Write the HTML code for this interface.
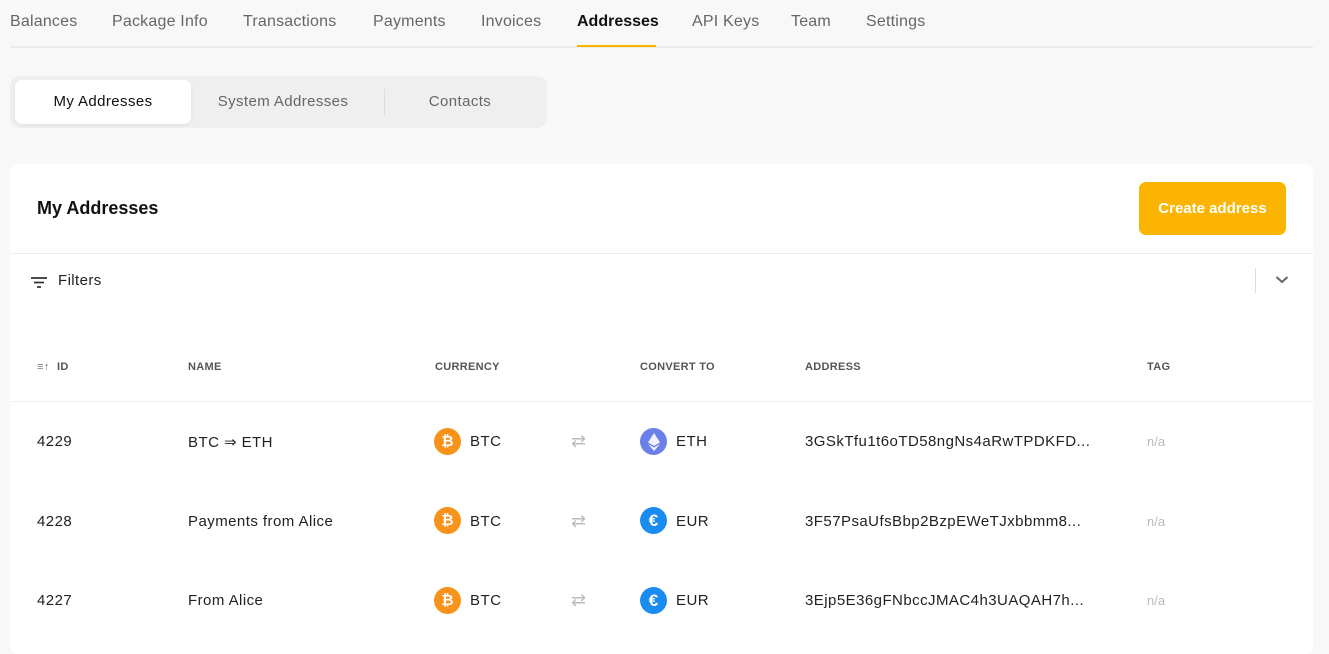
<!DOCTYPE html>
<html><head><meta charset="utf-8"><style>
*{box-sizing:border-box;margin:0;padding:0}
body{width:1329px;height:641px;overflow:hidden;background:#f8f8f8;font-family:"Liberation Sans",sans-serif;color:#222;position:relative}
.a{position:absolute;white-space:nowrap}
.nav{font-size:16px;color:#666;top:13px;letter-spacing:.2px}
.hd{font-size:11px;color:#555;font-weight:bold;top:361px;letter-spacing:.3px}
.cell{font-size:15px;color:#222;letter-spacing:.45px}
.ic{width:27px;height:27px;border-radius:50%;display:flex;align-items:center;justify-content:center;color:#fff;font-weight:bold;font-size:15px}
</style></head><body>
<div class="a nav" style="left:10px">Balances</div>
<div class="a nav" style="left:112px">Package Info</div>
<div class="a nav" style="left:243px">Transactions</div>
<div class="a nav" style="left:373px">Payments</div>
<div class="a nav" style="left:481px">Invoices</div>
<div class="a nav" style="left:577px;color:#111;font-weight:bold;letter-spacing:0">Addresses</div>
<div class="a nav" style="left:692px">API Keys</div>
<div class="a nav" style="left:791px">Team</div>
<div class="a nav" style="left:866px">Settings</div>
<div class="a" style="left:10px;top:46px;width:1303px;height:2px;background:#ebebeb"></div>
<div class="a" style="left:577px;top:45px;width:79px;height:2px;background:#fbb500"></div>

<div class="a" style="left:10px;top:76px;width:537px;height:52px;background:#efefef;border-radius:10px"></div>
<div class="a" style="left:15px;top:80px;width:176px;height:44px;background:#fff;border-radius:7px;box-shadow:0 1px 3px rgba(0,0,0,.08)"></div>
<div class="a" style="left:15px;top:93px;width:176px;text-align:center;font-size:15px;color:#111;letter-spacing:.4px">My Addresses</div>
<div class="a" style="left:191px;top:93px;width:184px;text-align:center;font-size:15px;color:#666;letter-spacing:.4px">System Addresses</div>
<div class="a" style="left:384px;top:89px;width:1px;height:26px;background:#ddd"></div>
<div class="a" style="left:385px;top:93px;width:150px;text-align:center;font-size:15px;color:#666;letter-spacing:.4px">Contacts</div>

<div class="a" style="left:10px;top:164px;width:1303px;height:490px;background:#fff;border-radius:8px"></div>
<div class="a" style="left:37px;top:198px;font-size:18px;font-weight:bold;color:#111">My Addresses</div>
<div class="a" style="left:1139px;top:182px;width:147px;height:53px;background:#fbb500;border-radius:7px;color:#fff;font-weight:bold;font-size:15px;text-align:center;line-height:53px">Create address</div>
<div class="a" style="left:10px;top:253px;width:1303px;height:1px;background:#eee"></div>
<svg class="a" style="left:30px;top:275px" width="18" height="14"><path d="M1 3h16M4 7.5h10M7 12h4" stroke="#333" stroke-width="1.8"/></svg>
<div class="a" style="left:58px;top:272px;font-size:15px;color:#222;letter-spacing:.4px">Filters</div>
<div class="a" style="left:1255px;top:268px;width:1px;height:25px;background:#ddd"></div>
<svg class="a" style="left:1275px;top:275px" width="14" height="10"><path d="M1.5 2l5.5 5 5.5-5" fill="none" stroke="#666" stroke-width="2"/></svg>

<div class="a hd" style="left:37px;color:#777">≡↑</div>
<div class="a hd" style="left:57px">ID</div>
<div class="a hd" style="left:188px">NAME</div>
<div class="a hd" style="left:435px">CURRENCY</div>
<div class="a hd" style="left:640px">CONVERT TO</div>
<div class="a hd" style="left:805px">ADDRESS</div>
<div class="a hd" style="left:1147px">TAG</div>
<div class="a" style="left:10px;top:401px;width:1303px;height:1px;background:#f0f0f0"></div>

<div class="a cell" style="left:37px;top:433px">4229</div>
<div class="a cell" style="left:188px;top:433px">BTC ⇒ ETH</div>
<div class="a ic" style="left:434px;top:428px;background:#f7931a">₿</div>
<div class="a cell" style="left:470px;top:433px">BTC</div>
<div class="a" style="left:571px;top:431px;font-size:18px;color:#bbb">⇄</div>
<div class="a ic" style="left:640px;top:428px;background:#6a80e8"><svg width="12" height="18"><path d="M6 0L0 9.5 6 13 12 9.5Z M0 11l6 7 6-7-6 3.5z" fill="#fff" opacity=".9"/></svg></div>
<div class="a cell" style="left:676px;top:433px">ETH</div>
<div class="a cell" style="left:805px;top:433px">3GSkTfu1t6oTD58ngNs4aRwTPDKFD...</div>
<div class="a" style="left:1147px;top:434px;font-size:13px;color:#bbb">n/a</div>

<div class="a cell" style="left:37px;top:513px">4228</div>
<div class="a cell" style="left:188px;top:513px">Payments from Alice</div>
<div class="a ic" style="left:434px;top:507px;background:#f7931a">₿</div>
<div class="a cell" style="left:470px;top:513px">BTC</div>
<div class="a" style="left:571px;top:511px;font-size:18px;color:#bbb">⇄</div>
<div class="a ic" style="left:640px;top:507px;background:#1a8cf0;font-size:17px">€</div>
<div class="a cell" style="left:676px;top:513px">EUR</div>
<div class="a cell" style="left:805px;top:513px">3F57PsaUfsBbp2BzpEWeTJxbbmm8...</div>
<div class="a" style="left:1147px;top:514px;font-size:13px;color:#bbb">n/a</div>

<div class="a cell" style="left:37px;top:592px">4227</div>
<div class="a cell" style="left:188px;top:592px">From Alice</div>
<div class="a ic" style="left:434px;top:587px;background:#f7931a">₿</div>
<div class="a cell" style="left:470px;top:592px">BTC</div>
<div class="a" style="left:571px;top:590px;font-size:18px;color:#bbb">⇄</div>
<div class="a ic" style="left:640px;top:587px;background:#1a8cf0;font-size:17px">€</div>
<div class="a cell" style="left:676px;top:592px">EUR</div>
<div class="a cell" style="left:805px;top:592px">3Ejp5E36gFNbccJMAC4h3UAQAH7h...</div>
<div class="a" style="left:1147px;top:593px;font-size:13px;color:#bbb">n/a</div>
</body></html>
